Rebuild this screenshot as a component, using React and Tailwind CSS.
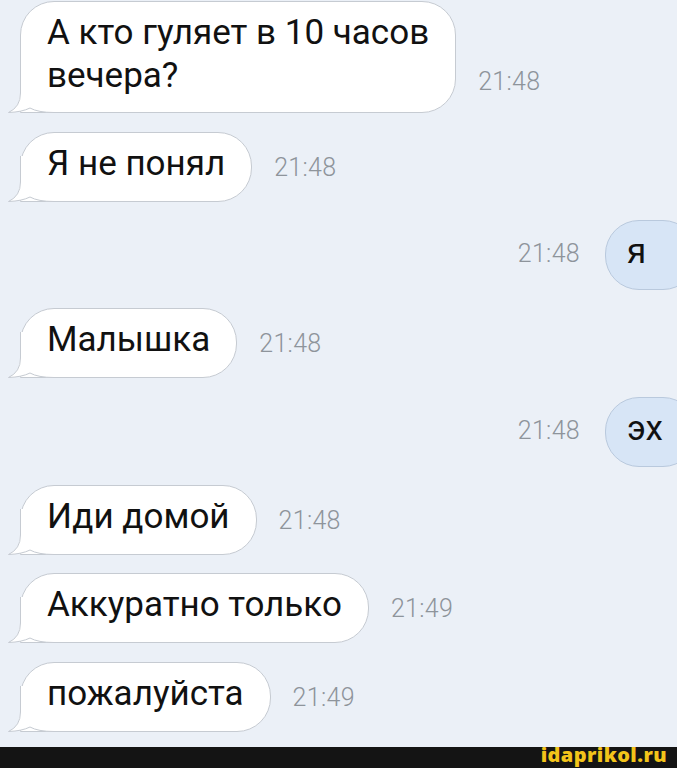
// App.jsx
// Chat screenshot: incoming white bubbles on the left, outgoing blue ones on the right

import React from 'react'

const messages = [
  { side: 'in', lines: ['А кто гуляет в 10 часов', 'вечера?'], time: '21:48', mt: 'mt-[1px]' },
  { side: 'in', lines: ['Я не понял'], time: '21:48', mt: 'mt-[19px]' },
  { side: 'out', lines: ['я'], time: '21:48', mt: 'mt-[18px]' },
  { side: 'in', lines: ['Малышка'], time: '21:48', mt: 'mt-[18px]' },
  { side: 'out', lines: ['эх'], time: '21:48', mt: 'mt-[19px]' },
  { side: 'in', lines: ['Иди домой'], time: '21:48', mt: 'mt-[18px]' },
  { side: 'in', lines: ['Аккуратно только'], time: '21:49', mt: 'mt-[18px]' },
  { side: 'in', lines: ['пожалуйста'], time: '21:49', mt: 'mt-[19px]' },
]

function Tail() {
  // little hook at the bottom-left of an incoming bubble
  return (
    <svg
      className="absolute left-[-13px] bottom-[-1px]"
      width="46"
      height="46"
      viewBox="0 0 46 46"
    >
      <path d="M12 0 L12 26 Q12 40 0.5 45.5 Q14 45 22 41 Q30 45.5 46 45.5 L46 0 Z" fill="#ffffff" />
      <path
        d="M12.5 0 L12.5 26 Q12.5 40 0.5 45.5 Q14 45 22 41 Q30 45.5 46 45.5"
        fill="none"
        stroke="#c6cbd2"
        strokeWidth="1"
      />
    </svg>
  )
}

function Time({ children }) {
  return (
    <span className="text-[25px] leading-[24px] font-light text-[#8e949b] tracking-[0.3px]">
      {children}
    </span>
  )
}

function Incoming({ m }) {
  const two = m.lines.length > 1
  return (
    <div className={`flex items-end pl-5 ${m.mt}`}>
      <div
        className={
          'relative bg-white border border-[#c6cbd2] rounded-[34px] rounded-bl-none pl-[26px] pr-[26px] pt-[9px] pb-[15px] text-[35px] text-[#111111] ' +
          (two ? 'leading-[43px]' : 'leading-[44px]')
        }
      >
        <Tail />
        <div className="relative">
          {m.lines.map((l, i) => (
            <div key={i}>{l}</div>
          ))}
        </div>
      </div>
      <div className={`ml-[22px] ${two ? 'mb-[16px]' : 'mb-[19px]'}`}>
        <Time>{m.time}</Time>
      </div>
    </div>
  )
}

function Outgoing({ m }) {
  return (
    <div className={`flex items-end justify-end mr-[-20px] ${m.mt}`}>
      <div className="mr-[25px] mb-[21px]">
        <Time>{m.time}</Time>
      </div>
      <div className="w-[92px] bg-[#d7e5f6] border border-[#b9c9dd] rounded-[34px] pl-[21px] pt-[9px] pb-[15px] text-[35px] leading-[44px] text-[#111111]">
        {m.lines[0]}
      </div>
    </div>
  )
}

export default function App() {
  return (
    <div className="w-[677px] h-[768px] overflow-hidden bg-[#ebf0f7] flex flex-col font-['Roboto','Noto_Sans',sans-serif]">
      <div className="flex flex-col">
        {messages.map((m, i) =>
          m.side === 'in' ? <Incoming key={i} m={m} /> : <Outgoing key={i} m={m} />
        )}
      </div>
      {/* watermark strip; the text's line box rises above the strip so the glyphs stay inside */}
      <div className="mt-auto h-[21px] bg-[#141414] flex items-end justify-end pr-[10px]">
        <span className="font-['Open_Sans',sans-serif] font-extrabold text-[20px] leading-[1.37] text-[#f3c41a] tracking-[0.4px]">
          idaprikol.ru
        </span>
      </div>
    </div>
  )
}
